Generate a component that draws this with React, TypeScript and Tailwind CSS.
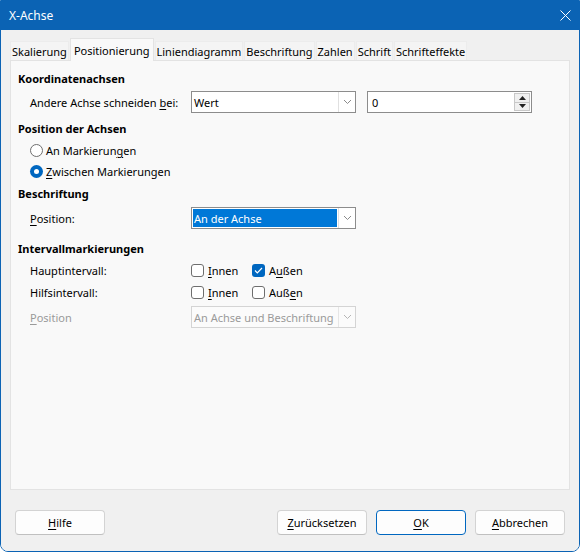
import React from "react";

const U = ({ children }: { children: React.ReactNode }) => (
  <span className="underline underline-offset-[2px] decoration-[1px]">{children}</span>
);

const Chevron = ({ color = "#7a7a7a" }: { color?: string }) => (
  <svg width="9" height="6" viewBox="0 0 9 6">
    <path d="M1 1 L4.5 4.5 L8 1" fill="none" stroke={color} strokeWidth="1" />
  </svg>
);

const Combo = ({
  text,
  selected,
  disabled,
}: {
  text: string;
  selected?: boolean;
  disabled?: boolean;
}) => (
  <div
    className={`w-[165px] h-[22px] flex border ${
      disabled ? "border-[#d4d4d4] bg-[#fbfbfb]" : "border-[#8c8c8c] bg-white"
    }`}
  >
    <div className="flex-1 flex items-center p-[1px] min-w-0">
      <div
        className={`h-full w-full flex items-center pl-[1px] ${
          selected ? "bg-[#0078d7] text-white" : disabled ? "text-[#9a9a9a]" : "text-black"
        }`}
      >
        {text}
      </div>
    </div>
    <div
      className={`w-[17px] flex items-center justify-center border-l ${
        disabled ? "border-[#e6e6e6]" : "border-[#e0e0e0]"
      }`}
    >
      <Chevron color={disabled ? "#b5b5b5" : "#8a8a8a"} />
    </div>
  </div>
);

const Spin = () => (
  <div className="w-[165px] h-[22px] flex border border-[#8c8c8c] bg-white">
    <div className="flex-1 flex items-center pl-[4px]">0</div>
    <div className="w-[16px] my-[1px] mr-[1px] flex flex-col border border-[#c8c8c8] bg-[#f0f0f0]">
      <div className="flex-1 flex items-center justify-center border-b border-[#c8c8c8]">
        <svg width="7" height="4" viewBox="0 0 7 4">
          <path d="M3.5 0 L7 4 L0 4 Z" fill="#222" />
        </svg>
      </div>
      <div className="flex-1 flex items-center justify-center">
        <svg width="7" height="4" viewBox="0 0 7 4">
          <path d="M0 0 L7 0 L3.5 4 Z" fill="#222" />
        </svg>
      </div>
    </div>
  </div>
);

const Radio = ({ checked, children }: { checked?: boolean; children: React.ReactNode }) => (
  <div className="h-[21px] flex items-center pl-[19px]">
    {checked ? (
      <div className="w-[13px] h-[13px] rounded-full bg-[#0067c0] flex items-center justify-center">
        <div className="w-[5px] h-[5px] rounded-full bg-white" />
      </div>
    ) : (
      <div className="w-[13px] h-[13px] rounded-full border border-[#6e6e6e] bg-white" />
    )}
    <span className="ml-[3px]">{children}</span>
  </div>
);

const Check = ({ checked, children }: { checked?: boolean; children: React.ReactNode }) => (
  <div className="flex items-center">
    {checked ? (
      <div className="w-[13px] h-[13px] rounded-[3px] bg-[#0067c0] flex items-center justify-center">
        <svg width="9" height="7" viewBox="0 0 9 7">
          <path d="M1 3.5 L3.3 5.8 L8 1" fill="none" stroke="white" strokeWidth="1.2" />
        </svg>
      </div>
    ) : (
      <div className="w-[13px] h-[13px] rounded-[3px] border border-[#6e6e6e] bg-white" />
    )}
    <span className="ml-[4px]">{children}</span>
  </div>
);

const Heading = ({ children, className = "" }: { children: React.ReactNode; className?: string }) => (
  <div className={`h-[18px] flex items-center pl-[7px] font-bold ${className}`}>{children}</div>
);

const Row = ({
  label,
  children,
  className = "",
  disabled,
}: {
  label: React.ReactNode;
  children: React.ReactNode;
  className?: string;
  disabled?: boolean;
}) => (
  <div className={`flex items-center ${className}`}>
    <div className={`w-[180px] pl-[19px] ${disabled ? "text-[#9a9a9a]" : ""}`}>{label}</div>
    {children}
  </div>
);

const Btn = ({ children, def }: { children: React.ReactNode; def?: boolean }) => (
  <div
    className={`w-[90px] h-[25px] flex items-center justify-center rounded-[4px] bg-[#fdfdfd] border ${
      def ? "border-[#0067c0]" : "border-[#d3d3d3] border-b-[#c0c0c0]"
    }`}
  >
    {children}
  </div>
);

const tabs = [
  "Skalierung",
  "Positionierung",
  "Liniendiagramm",
  "Beschriftung",
  "Zahlen",
  "Schrift",
  "Schrifteffekte",
];

export default function App() {
  return (
    <div className="w-[580px] h-[552px] bg-white font-['Noto_Sans',sans-serif] text-[11px] text-black leading-none">
      <div className="w-full h-full flex flex-col border border-[#0b63b4] rounded-b-[8px] overflow-hidden">
        <div className="h-[29px] bg-[#0b63b4] text-white text-[12px] flex items-center justify-between pl-[8px] pr-[8px] shrink-0">
          <span>X-Achse</span>
          <svg width="11" height="11" viewBox="0 0 11 11">
            <path d="M0.5 0.5 L10.5 10.5 M10.5 0.5 L0.5 10.5" stroke="white" strokeWidth="1" />
          </svg>
        </div>
        <div className="flex-1 flex flex-col bg-[#f0f0f0]">
          <div className="px-[9px] pt-[8px] flex-1 flex flex-col">
            <div className="h-[22px] flex items-end relative z-10">
              {tabs.map((t, i) =>
                i === 1 ? (
                  <div
                    key={t}
                    className="h-[23px] -mb-[1px] px-[3px] flex items-center bg-[#f9f9f9] border border-b-0 border-[#e3e3e3] mr-[1px]"
                  >
                    {t}
                  </div>
                ) : (
                  <div
                    key={t}
                    className="h-[19px] px-[1px] flex items-center bg-[#f4f4f4] border border-b-0 border-[#ececec] mr-[1px]"
                  >
                    {t}
                  </div>
                )
              )}
            </div>
            <div className="flex-1 bg-[#f9f9f9] border border-[#e3e3e3] pt-[8px]">
              <Heading>Koordinatenachsen</Heading>
              <Row className="mt-[4px]" label={<>Andere Achse schneiden <U>b</U>ei:</>}>
                <Combo text="Wert" />
                <div className="w-[11px]" />
                <Spin />
              </Row>
              <Heading className="mt-[6px]">Position der Achsen</Heading>
              <div className="mt-[3px]">
                <Radio>
                  An Markierun<U>g</U>en
                </Radio>
                <Radio checked>
                  <U>Z</U>wischen Markierungen
                </Radio>
              </div>
              <Heading className="mt-[2px]">Beschriftung</Heading>
              <Row className="mt-[5px]" label={<><U>P</U>osition:</>}>
                <Combo text="An der Achse" selected />
              </Row>
              <Heading className="mt-[10px]">Intervallmarkierungen</Heading>
              <Row className="mt-[2px] h-[22px]" label="Hauptintervall:">
                <div className="w-[61px]">
                  <Check>
                    <U>I</U>nnen
                  </Check>
                </div>
                <Check checked>
                  A<U>u</U>ßen
                </Check>
              </Row>
              <Row className="h-[22px]" label="Hilfsintervall:">
                <div className="w-[61px]">
                  <Check>
                    <U>I</U>nnen
                  </Check>
                </div>
                <Check>
                  Auß<U>e</U>n
                </Check>
              </Row>
              <Row className="mt-[3px]" disabled label={<><U>P</U>osition</>}>
                <Combo text="An Achse und Beschriftung" disabled />
              </Row>
            </div>
          </div>
          <div className="h-[61px] shrink-0 flex items-start pt-[20px] px-[14px]">
            <Btn>
              <U>H</U>ilfe
            </Btn>
            <div className="flex-1" />
            <div className="flex gap-[9px]">
              <Btn>
                <U>Z</U>urücksetzen
              </Btn>
              <Btn def>
                <U>O</U>K
              </Btn>
              <Btn>
                <U>A</U>bbrechen
              </Btn>
            </div>
          </div>
        </div>
      </div>
    </div>
  );
}
